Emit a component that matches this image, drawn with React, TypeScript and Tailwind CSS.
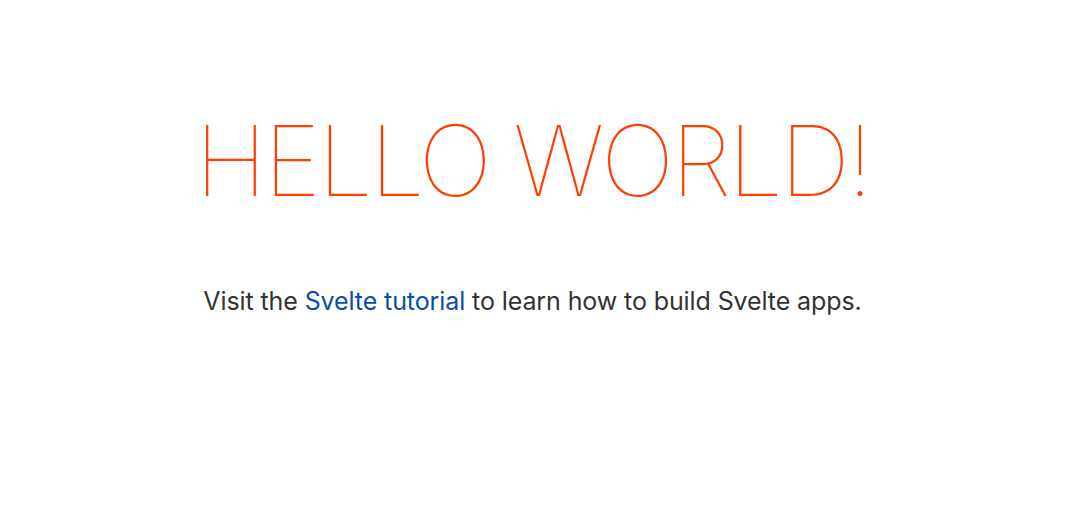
export default function App() {
  return (
    <main className="min-h-[513px] bg-white text-center pt-[102px] pr-[15px] font-['Inter','Roboto',sans-serif]">
      <h1 className="text-[98px] leading-[1.2] font-thin uppercase text-[#ff3e00] tracking-[-3.2px]">
        Hello world!
      </h1>
      <p className="mt-[63px] text-[25px] text-[#333] tracking-[-0.1px]">
        Visit the{' '}
        <a href="https://svelte.dev/tutorial" className="text-[#0a4ea6]">
          Svelte tutorial
        </a>{' '}
        to learn how to build Svelte apps.
      </p>
    </main>
  );
}
